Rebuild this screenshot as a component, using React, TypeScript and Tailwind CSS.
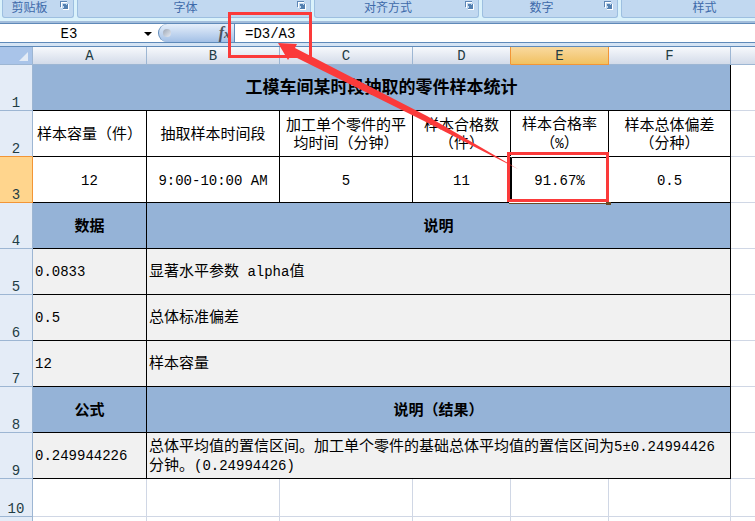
import React from "react";

const latin = "font-['Liberation_Mono','Noto_Sans_CJK_SC',monospace]";

const columns = ["A", "B", "C", "D", "E", "F"];

function LauncherIcon() {
  return (
    <svg width="9" height="9" viewBox="0 0 9 9" aria-hidden="true" shapeRendering="crispEdges">
      <path d="M0.5 6V0.5H7" fill="none" stroke="#5d86b5" />
      <path d="M1.5 6.5V1.5H7" fill="none" stroke="#ffffff" />
      <path d="M3 3h2l1 1 1-1h1v5H3V7l1-1-1-1z" fill="#5480b0" />
      <path d="M8.5 3V8.5H3" fill="none" stroke="#ffffff" />
    </svg>
  );
}

function RibbonGroup({ label, width }: { label: string; width: string }) {
  return (
    <section
      className={`${width} flex h-[18px] shrink-0 items-start rounded-b-[3px] border border-t-0 border-[#9dbfe0] bg-[#c1d8f0] pr-1`}
    >
      <span className="flex-1 pr-1 text-center text-[12px] leading-[18px] text-[#3e6aaa]">{label}</span>
      <button type="button" aria-label={`${label}选项`} className="mt-px flex size-[9px]">
        <LauncherIcon />
      </button>
    </section>
  );
}

function Ribbon() {
  return (
    <header className="flex h-[23px] gap-[3px] overflow-hidden border-b-2 border-[#a3bddb] bg-[#daf2fb] pl-0.5">
      <RibbonGroup label="剪贴板" width="w-[72px]" />
      <RibbonGroup label="字体" width="w-[234px]" />
      <RibbonGroup label="对齐方式" width="w-[165px]" />
      <RibbonGroup label="数字" width="w-[136px]" />
      <RibbonGroup label="样式" width="w-[184px]" />
    </header>
  );
}

function FormulaBar() {
  return (
    <div className="flex h-5 border-y border-[#5f8ab9] bg-white">
      <input
        aria-label="名称框"
        defaultValue="E3"
        className={`${latin} w-[138px] bg-white pt-0.5 text-center text-[14px] leading-4 text-black outline-none`}
      />
      <button type="button" aria-label="名称列表" className="flex w-5 items-center justify-center pt-0.5">
        <svg width="8" height="4" viewBox="0 0 8 4" aria-hidden="true">
          <path d="M0 0h8L4 4z" fill="#000" />
        </svg>
      </button>
      <button
        type="button"
        aria-label="插入函数"
        className="flex w-[77px] items-center justify-between rounded-l-full border-r border-l border-[#5f8ab9] bg-linear-to-b from-[#e6effa] to-[#a3c0e6] pl-1"
      >
        <span className="size-2 rounded-full bg-linear-to-br from-[#9ea7b5] to-[#e8edf5]" />
        <span className="pr-1 font-['Liberation_Serif',serif] text-[16px] leading-4 font-bold text-[#4c5360] italic">
          f<span className="text-[12px]">x</span>
        </span>
      </button>
      <input
        aria-label="编辑栏"
        defaultValue="=D3/A3"
        className={`${latin} min-w-0 flex-1 bg-white pt-0.5 pl-[10px] text-[14px] leading-4 text-black outline-none`}
      />
    </div>
  );
}

function ColumnHeaders() {
  return (
    <thead>
      <tr className="h-[18px]">
        <th className="border-r border-b border-[#9db6d3] bg-[#a9c4e9] p-0">
          <svg className="mt-px mr-1 ml-auto" width="9" height="9" viewBox="0 0 9 9" aria-hidden="true">
            <path d="M9 0V9H0z" fill="#e3ebf6" />
          </svg>
        </th>
        {columns.map((c) => (
          <th
            key={c}
            scope="col"
            className={`border-r border-b p-0 pt-px text-[14px] leading-4 font-normal text-[#1f3c44] ${
              c === "E"
                ? "border-[#f29536] bg-linear-to-b from-[#f9d99f] to-[#f1c15f]"
                : c === "D"
                  ? "border-r-[#f29536] border-b-[#9db6d3] bg-linear-to-b from-[#f7f9fc] to-[#d3dbe9]"
                  : "border-[#9db6d3] bg-linear-to-b from-[#f7f9fc] to-[#d3dbe9]"
            }`}
          >
            {c}
          </th>
        ))}
        <th className="border-b border-[#9db6d3] bg-linear-to-b from-[#f7f9fc] to-[#d3dbe9] p-0" />
      </tr>
    </thead>
  );
}

function RowHeader({ n }: { n?: number }) {
  const tone =
    n === 3
      ? "border-[#f29536] bg-[#ffd58d]"
      : n === 2
        ? "border-r-[#9db6d3] border-b-[#f29536] bg-[#e4ecf7]"
        : "border-[#9db6d3] bg-[#e4ecf7]";
  return (
    <th
      scope="row"
      className={`${tone} border-r border-b p-0 align-bottom text-[14px] leading-[14px] font-normal text-[#1f3c44]`}
    >
      {n}
    </th>
  );
}

type CellProps = { children?: React.ReactNode; span?: number; kind?: "head" | "plain" | "note" };

function Cell({ children, span = 1, kind = "plain" }: CellProps) {
  const look = {
    head: "bg-[#95b3d7] pt-1 text-center font-bold",
    plain: "bg-white pt-1 text-center",
    note: "bg-[#f1f1f1] pt-0.5 pl-0.5 text-left",
  }[kind];
  return (
    <td colSpan={span} className={`${look} border-r border-b border-black text-[15px] leading-[18px] text-black`}>
      {children}
    </td>
  );
}

function Num({ children }: { children: React.ReactNode }) {
  return <span className="text-[14px]">{children}</span>;
}

function Edge() {
  return <td className="border-b border-[#d0d7e5] p-0" />;
}

function Row({ n, children }: { n: number; children: React.ReactNode }) {
  return (
    <tr className="h-[46px]">
      <RowHeader n={n} />
      {children}
      <Edge />
    </tr>
  );
}

function EmptyCells() {
  return (
    <>
      {columns.map((c) => (
        <td key={c} className="border-r border-b border-[#d0d7e5] p-0" />
      ))}
      <Edge />
    </>
  );
}

function Sheet() {
  return (
    <table className="w-full table-fixed border-separate border-spacing-0 bg-white">
      <colgroup>
        <col className="w-[33px]" />
        <col className="w-[114px]" />
        <col className="w-[133px]" />
        <col className="w-[133px]" />
        <col className="w-[98px]" />
        <col className="w-[98px]" />
        <col className="w-[122px]" />
        <col />
      </colgroup>
      <ColumnHeaders />
      <tbody>
        <Row n={1}>
          <Cell kind="head" span={6}>
            <span className="text-[17px]">工模车间某时段抽取的零件样本统计</span>
          </Cell>
        </Row>
        <Row n={2}>
          <Cell>样本容量（件）</Cell>
          <Cell>抽取样本时间段</Cell>
          <Cell>加工单个零件的平<br />均时间（分钟）</Cell>
          <Cell>样本合格数<br />（件）</Cell>
          <Cell>样本合格率<br />（<Num>%</Num>）</Cell>
          <Cell>样本总体偏差<br />（分种）</Cell>
        </Row>
        <Row n={3}>
          <Cell><Num>12</Num></Cell>
          <Cell><Num>9:00-10:00 AM</Num></Cell>
          <Cell><Num>5</Num></Cell>
          <Cell><Num>11</Num></Cell>
          <Cell><Num>91.67%</Num></Cell>
          <Cell><Num>0.5</Num></Cell>
        </Row>
        <Row n={4}>
          <Cell kind="head">数据</Cell>
          <Cell kind="head" span={5}>说明</Cell>
        </Row>
        <Row n={5}>
          <Cell kind="note"><Num>0.0833</Num></Cell>
          <Cell kind="note" span={5}>显著水平参数<Num> alpha</Num>值</Cell>
        </Row>
        <Row n={6}>
          <Cell kind="note"><Num>0.5</Num></Cell>
          <Cell kind="note" span={5}>总体标准偏差</Cell>
        </Row>
        <Row n={7}>
          <Cell kind="note"><Num>12</Num></Cell>
          <Cell kind="note" span={5}>样本容量</Cell>
        </Row>
        <Row n={8}>
          <Cell kind="head">公式</Cell>
          <Cell kind="head" span={5}>说明（结果）</Cell>
        </Row>
        <Row n={9}>
          <Cell kind="note"><Num>0.249944226</Num></Cell>
          <Cell kind="note" span={5}>
            总体平均值的置信区间。加工单个零件的基础总体平均值的置信区间为<Num>5±0.24994426</Num>
            <br />
            分钟。<Num>(0.24994426)</Num>
          </Cell>
        </Row>
        <tr className="h-[38px]">
          <RowHeader n={10} />
          <EmptyCells />
        </tr>
        <tr className="h-[38px]">
          <RowHeader />
          <EmptyCells />
        </tr>
      </tbody>
    </table>
  );
}

/* Red call-outs linking the selected cell to its formula. */
function Annotations() {
  return (
    <svg
      className="pointer-events-none absolute top-0 left-0"
      width="755"
      height="521"
      viewBox="0 0 755 521"
      aria-hidden="true"
    >
      <path d="M511.5 202V157.5H608" fill="none" stroke="#000" />
      <path d="M510 156.5H608" stroke="#fff" />
      <path d="M509 202.5H606" stroke="#fff" />
      <path d="M509 203.5H606" stroke="#6b4a24" />
      <rect x="606" y="202" width="5" height="3" fill="#6b4a24" />
      <rect x="229.5" y="13.5" width="81" height="43" fill="none" stroke="#fb3a3a" strokeWidth="3" />
      <rect x="508.5" y="153.5" width="99" height="47" fill="none" stroke="#fb3a3a" strokeWidth="3" />
      <path d="M278 43L297 44L295 48L427 116L518 169L424 121L291 55L288 60Z" fill="#fb3a3a" />
    </svg>
  );
}

export default function App() {
  return (
    <main
      className={`${latin} relative h-screen min-w-[755px] overflow-hidden bg-white`}
    >
      <Ribbon />
      <FormulaBar />
      <div className="h-1 border-b border-[#5f8ab9] bg-[#d5e4f4]" />
      <Sheet />
      <Annotations />
    </main>
  );
}
